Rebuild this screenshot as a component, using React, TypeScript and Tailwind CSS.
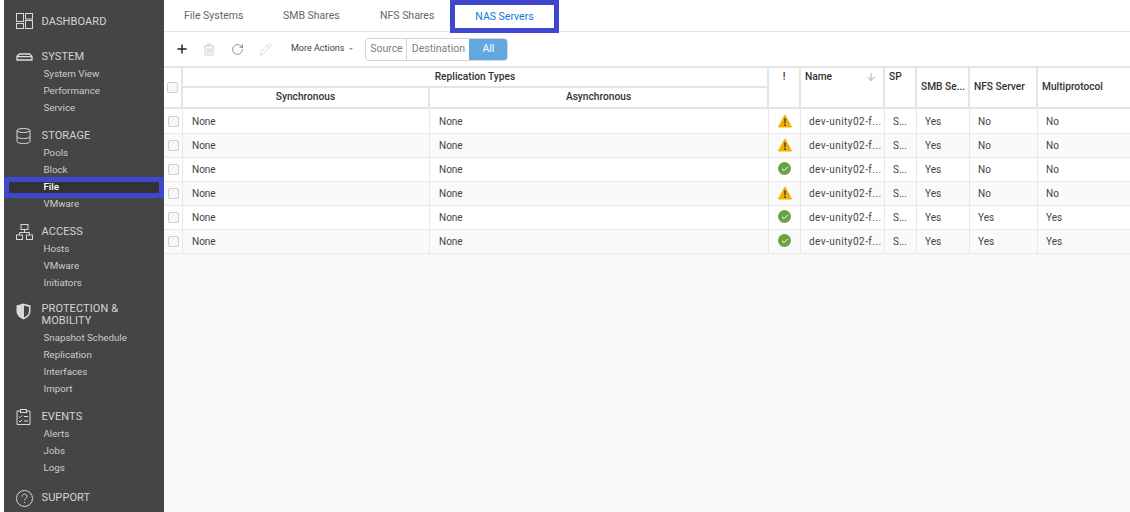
import type { ReactNode } from "react";
import { Plus, RotateCw, Pencil, ArrowDown, Check } from "lucide-react";

type NavGroup = { title: string[]; icon: ReactNode; items: string[]; gap: string };

const stroke = { fill: "none", stroke: "#d8d8d8", strokeWidth: 1 };

const DashIcon = () => (
  <svg width="17" height="16" viewBox="0 0 17 16" {...stroke} className="-translate-y-px">
    <rect x="0.5" y="0.5" width="7" height="8" />
    <rect x="9.5" y="0.5" width="7" height="5.5" />
    <rect x="0.5" y="10.5" width="7" height="5" />
    <rect x="9.5" y="7.5" width="7" height="8" />
  </svg>
);

const SystemIcon = () => (
  <svg width="17" height="8" viewBox="0 0 17 8" fill="none" stroke="#dddddd" strokeWidth="1.3">
    <path d="M1 3.2 L3.5 1 H13.5 L16 3.2 V7 H1 Z M1 3.6 H16" />
  </svg>
);

const StorageIcon = () => (
  <svg width="15" height="16" viewBox="0 0 15 16" {...stroke}>
    <ellipse cx="7.5" cy="2.5" rx="6.5" ry="2" />
    <path d="M1 2.5 V13.5 C1 14.7 4 15.5 7.5 15.5 C11 15.5 14 14.7 14 13.5 V2.5 M1 8.5 C1 9.7 4 10.5 7.5 10.5 C11 10.5 14 9.7 14 8.5" />
  </svg>
);

const AccessIcon = () => (
  <svg width="17" height="16" viewBox="0 0 17 16" {...stroke}>
    <rect x="5" y="0.5" width="7" height="5" />
    <rect x="0.5" y="11" width="6" height="4.5" />
    <rect x="10.5" y="11" width="6" height="4.5" />
    <path d="M8.5 5.5 V8.5 M3.5 11 V8.5 H13.5 V11" />
  </svg>
);

const ShieldIcon = () => (
  <svg width="15" height="17" viewBox="0 0 15 17">
    <path d="M7.5 .5 L14.5 2.5 V8 C14.5 12 11.5 15 7.5 16.5 C3.5 15 .5 12 .5 8 V2.5 Z" fill="#d9d9d9" />
    <path d="M8 2.6 L13 4 V8 C13 10.8 11 13.2 8 14.6 Z" fill="#454545" />
  </svg>
);

const EventsIcon = () => (
  <svg width="15" height="16" viewBox="0 0 15 16" {...stroke}>
    <path d="M4.5 2 H1 V15.5 H14 V2 H10.5" />
    <rect x="4.5" y="0.5" width="6" height="3" />
    <path d="M3 7.5 L4 8.5 L6 6.5 M8 7.5 H12 M3 12 L4 13 L6 11 M8 12 H12" />
  </svg>
);

const HelpIcon = () => (
  <svg width="17" height="17" viewBox="0 0 17 17" {...stroke}>
    <circle cx="8.5" cy="8.5" r="8" />
    <path d="M6 6.6 C6 5 7.2 4.2 8.5 4.2 C10 4.2 11 5.2 11 6.4 C11 8.2 8.6 8.4 8.6 10.4" />
    <path d="M8.6 12 V13" />
  </svg>
);

const TrashIcon = () => (
  <svg width="10" height="13" viewBox="0 0 11 13" fill="none" stroke="#d0c8be" strokeWidth="1">
    <path d="M0 2.5 H11 M4 2.5 V.5 H7 V2.5" />
    <path d="M1 2.5 V12.5 H10 V2.5 M3.5 5 V10.5 M5.5 5 V10.5 M7.5 5 V10.5" />
  </svg>
);

const groups: NavGroup[] = [
  { title: ["System"], icon: <SystemIcon />, items: ["System View", "Performance", "Service"], gap: "mt-[21px]" },
  { title: ["Storage"], icon: <StorageIcon />, items: ["Pools", "Block", "File", "VMware"], gap: "mt-[12px]" },
  { title: ["Access"], icon: <AccessIcon />, items: ["Hosts", "VMware", "Initiators"], gap: "mt-[12px]" },
  {
    title: ["Protection &", "Mobility"],
    icon: <ShieldIcon />,
    items: ["Snapshot Schedule", "Replication", "Interfaces", "Import"],
    gap: "mt-[11px]",
  },
  { title: ["Events"], icon: <EventsIcon />, items: ["Alerts", "Jobs", "Logs"], gap: "mt-[12px]" },
];

const rows = [
  { warn: true, nfs: "No", multi: "No" },
  { warn: true, nfs: "No", multi: "No" },
  { warn: false, nfs: "No", multi: "No" },
  { warn: true, nfs: "No", multi: "No" },
  { warn: false, nfs: "Yes", multi: "Yes" },
  { warn: false, nfs: "Yes", multi: "Yes" },
];

const cols = "grid-cols-[19px_247px_339px_32px_84px_32px_53px_68px_1fr]";
const heading = "text-[11px] uppercase tracking-[0.1px]";

function Box() {
  return <span className="block h-[11px] w-[11px] rounded-[2px] border border-[#cfcfcf] bg-[#f6f6f6]" />;
}

function Sidebar() {
  return (
    <aside className="ml-[4px] h-[512px] w-[160px] shrink-0 overflow-hidden bg-[#454545] pt-[15px] text-[#d4d4d4]">
      <div className="flex h-[14px] items-center">
        <span className="ml-[12px] flex w-[25.5px]">
          <DashIcon />
        </span>
        <span className={heading}>Dashboard</span>
      </div>
      {groups.map((g) => (
        <div key={g.title[0]} className={g.gap}>
          <div className="flex items-start">
            <span className={`ml-[12px] flex w-[25.5px] items-center ${g.title.length > 1 ? "h-[16px]" : "h-[14px]"}`}>
              {g.icon}
            </span>
            <span className={`${heading} ${g.title.length > 1 ? "pb-[1px] leading-[12px]" : "leading-[14px]"}`}>
              {g.title.map((t) => (
                <span key={t} className="block">
                  {t}
                </span>
              ))}
            </span>
          </div>
          <ul className="mt-[2px]">
            {g.items.map((item) => (
              <li
                key={item}
                className={`relative flex h-[17px] items-center pl-[39.5px] text-[9.75px] ${
                  item === "File" ? "font-medium text-white" : "text-[#cccccc]"
                }`}
              >
                {item === "File" && (
                  <span className="absolute inset-x-0 top-[-2px] h-[21px] border-[5px] border-[#3f48cc] bg-[#333333]" />
                )}
                <span className="relative">{item}</span>
              </li>
            ))}
          </ul>
        </div>
      ))}
      <div className="mt-[14px] flex h-[14px] items-center">
        <span className="ml-[12px] flex w-[25.5px]">
          <HelpIcon />
        </span>
        <span className={heading}>Support</span>
      </div>
    </aside>
  );
}

function Tabs() {
  const tab = "flex h-full items-center text-[10.5px] text-[#666666]";
  return (
    <div className="flex h-[32px] items-stretch border-b border-[#e4e4e4] pl-[20px]">
      <span className={`${tab} w-[99px]`}>File Systems</span>
      <span className={`${tab} w-[97px]`}>SMB Shares</span>
      <span className={`${tab} w-[70px]`}>NFS Shares</span>
      <span className="flex h-[33px] w-[109px] items-center justify-center border-[5px] border-[#3f48cc] text-[10.5px] text-[#0b7bd6]">
        NAS Servers
      </span>
    </div>
  );
}

function Toolbar() {
  const seg = "flex h-full items-center justify-center text-[10.5px] text-[#808080]";
  return (
    <div className="flex h-[34px] items-center pl-[11px]">
      <Plus size={14} strokeWidth={2.5} color="#222222" />
      <span className="ml-[15px] flex">
        <TrashIcon />
      </span>
      <RotateCw size={13} strokeWidth={1.2} color="#555555" className="ml-[17px]" />
      <Pencil size={13} strokeWidth={1} color="#bcbcbc" className="ml-[15px]" />
      <span className="ml-[19px] text-[9px] text-[#444444]">More Actions</span>
      <svg width="4" height="2" viewBox="0 0 4 2" className="ml-[5px]">
        <path d="M0 0 H4 L2 2 Z" fill="#999999" />
      </svg>
      <div className="ml-[12px] flex h-[23px] overflow-hidden rounded-[4px] border border-[#d5d5d5]">
        <span className={`${seg} w-[41px] border-r border-[#d5d5d5]`}>Source</span>
        <span className={`${seg} w-[62px]`}>Destination</span>
        <span className="flex w-[38px] items-center justify-center bg-[#62a8e0] text-[10.5px] text-white">All</span>
      </div>
    </div>
  );
}

function HeaderCell({ className, children }: { className?: string; children?: ReactNode }) {
  return (
    <div className={`border-r-2 border-[#e4e4e4] text-[10.2px] font-medium text-[#333333] ${className ?? ""}`}>
      {children}
    </div>
  );
}

function Table() {
  return (
    <div className="min-h-0 flex-1 bg-[#f9f9f9]">
      <div className={`grid h-[43px] ${cols} grid-rows-[20px_19px] border-y-2 border-[#e4e4e4] bg-white`}>
        <HeaderCell className="row-span-2 flex items-center justify-center">
          <Box />
        </HeaderCell>
        <div className="col-span-2 flex items-center justify-center border-b-2 border-r-2 border-[#e4e4e4] pb-[1px] text-[10.2px] font-medium text-[#333333]">
          Replication Types
        </div>
        <HeaderCell className="row-span-2 pt-[1px] text-center">!</HeaderCell>
        <HeaderCell className="row-span-2 flex items-start justify-between pl-[4px] pr-[6px] pt-[1px]">
          Name
          <ArrowDown size={12} strokeWidth={2} color="#aaaaaa" className="mt-[2px]" />
        </HeaderCell>
        <HeaderCell className="row-span-2 pl-[4px] pt-[1px]">SP</HeaderCell>
        <HeaderCell className="row-span-2 flex items-center pb-[1px] pl-[4px]">SMB Se...</HeaderCell>
        <HeaderCell className="row-span-2 flex items-center pb-[1px] pl-[4px]">NFS Server</HeaderCell>
        <div className="row-span-2 flex items-center pb-[1px] pl-[4px] text-[10.2px] font-medium text-[#333333]">
          Multiprotocol
        </div>
        <HeaderCell className="flex items-center justify-center pb-[2px]">Synchronous</HeaderCell>
        <HeaderCell className="flex items-center justify-center pb-[2px]">Asynchronous</HeaderCell>
      </div>
      <div className="h-px bg-white" />
      {rows.map((r, i) => (
        <div
          key={i}
          className={`grid h-[24px] ${cols} items-stretch border-b border-[#e8e8e8] text-[10px] text-[#444444] ${
            i % 2 === 0 ? "bg-white" : "bg-[#fafafa]"
          }`}
        >
          <div className="flex items-center justify-center border-r border-[#e8e8e8]">
            <Box />
          </div>
          <div className="flex items-center border-r border-[#e8e8e8] pl-[9px]">None</div>
          <div className="flex items-center border-r border-[#e8e8e8] pl-[9px]">None</div>
          <div className="flex items-center justify-center border-r border-[#e8e8e8] pb-[2px]">
            {r.warn ? (
              <svg width="14" height="14" viewBox="0 0 14 14">
                <path d="M7 1 L13.5 13 H.5 Z" fill="#f5ad00" stroke="#f5ad00" strokeLinejoin="round" />
                <path d="M6.2 4.5 H7.8 L7.5 9.5 H6.5 Z M6.2 10.5 H7.8 V12 H6.2 Z" fill="#333333" />
              </svg>
            ) : (
              <span className="flex h-[13px] w-[13px] items-center justify-center rounded-full bg-[#6ba342]">
                <Check size={8} strokeWidth={3} color="#ffffff" />
              </span>
            )}
          </div>
          <div className="flex items-center border-r border-[#e8e8e8] pl-[8px] tracking-[0.45px]">dev-unity02-f...</div>
          <div className="flex items-center border-r border-[#e8e8e8] pl-[8px]">S...</div>
          <div className="flex items-center border-r border-[#e8e8e8] pl-[8px]">Yes</div>
          <div className="flex items-center border-r border-[#e8e8e8] pl-[8px]">{r.nfs}</div>
          <div className="flex items-center pl-[8px]">{r.multi}</div>
        </div>
      ))}
    </div>
  );
}

export default function App() {
  return (
    <div className="flex h-[512px] w-[1130px] overflow-hidden bg-white font-['Roboto',sans-serif]">
      <Sidebar />
      <main className="flex min-w-0 flex-1 flex-col">
        <Tabs />
        <Toolbar />
        <Table />
      </main>
    </div>
  );
}
